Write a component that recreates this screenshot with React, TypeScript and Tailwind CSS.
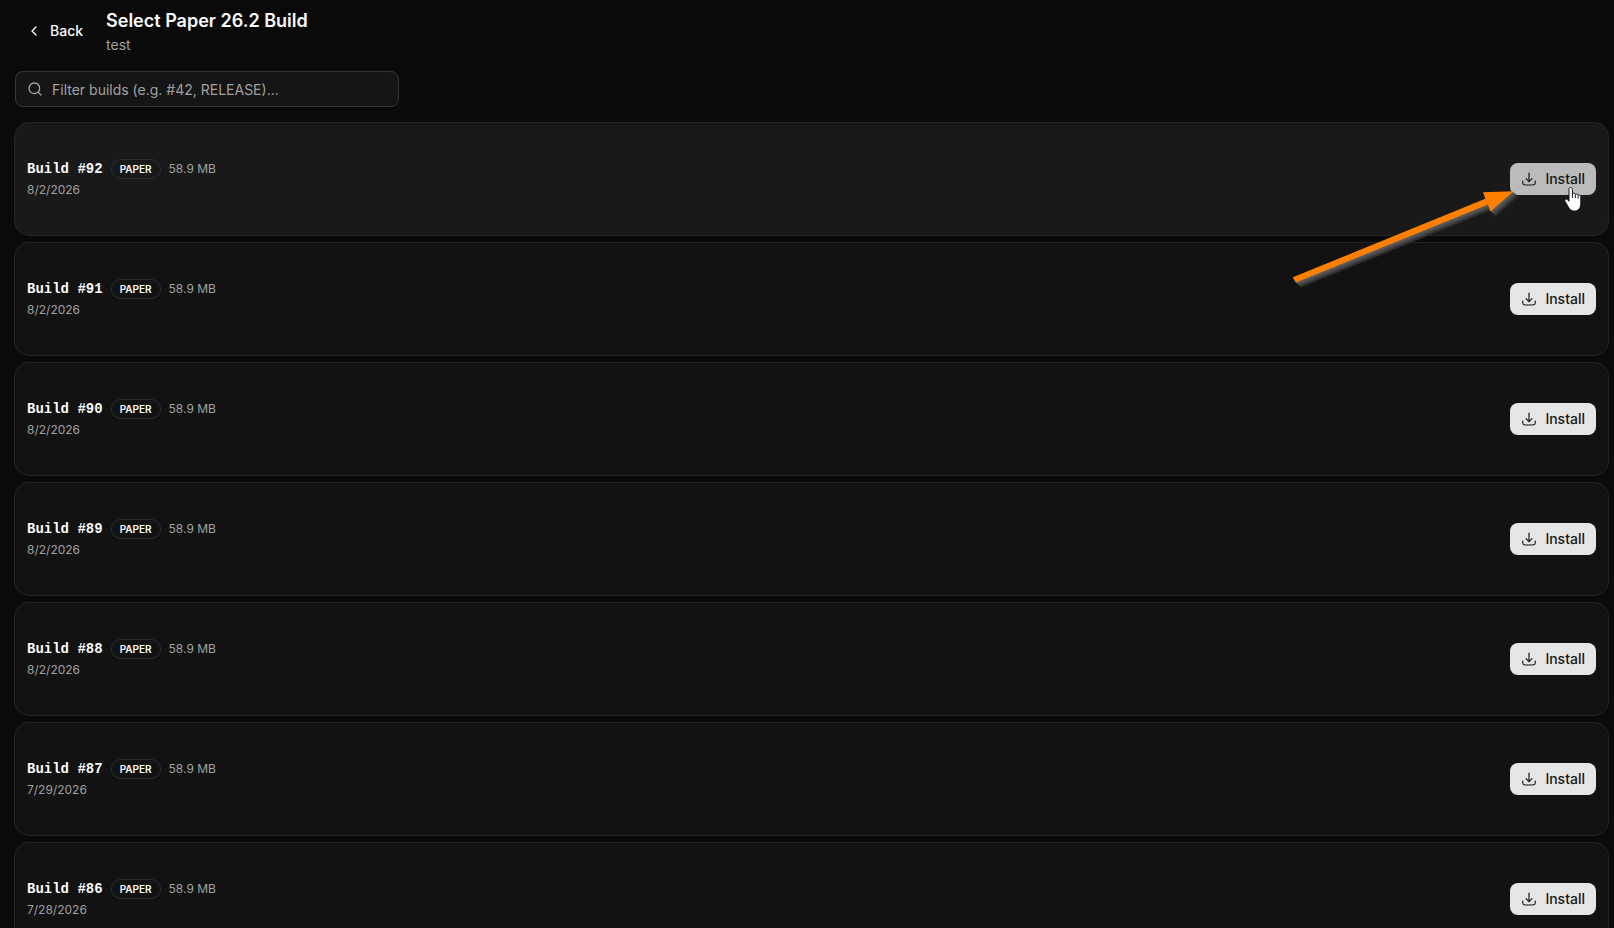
import { ChevronLeft, Search } from 'lucide-react';

type Build = { number: number; date: string; hovered?: boolean };

const builds: Build[] = [
  { number: 92, date: '8/2/2026', hovered: true },
  { number: 91, date: '8/2/2026' },
  { number: 90, date: '8/2/2026' },
  { number: 89, date: '8/2/2026' },
  { number: 88, date: '8/2/2026' },
  { number: 87, date: '7/29/2026' },
  { number: 86, date: '7/28/2026' },
];

function InstallIcon() {
  return (
    <svg viewBox="0 0 24 24" className="size-4" fill="none" stroke="currentColor" strokeWidth="1.8" strokeLinecap="round" strokeLinejoin="round" aria-hidden="true">
      <path d="M2.500 15c0 2.828 0 4.243.879 5.121C4.257 21 5.672 21 8.500 21h7c2.828 0 4.243 0 5.121-.879C21.500 19.243 21.500 17.828 21.500 15" />
      <path d="M12 3v13m0 0 4.500-4.500M12 16l-4.500-4.500" />
    </svg>
  );
}

function Pointer() {
  return (
    <svg viewBox="0 0 18 25" className="absolute left-[54px] top-6 z-20 h-[25px] w-[18px]" aria-hidden="true">
      <path
        d="M5 2.200c0-2.200 3.400-2.200 3.400 0v4.400c1-.8 2.500-.5 2.900.6 1-.6 2.400-.3 2.800.9 1.400-.5 2.700.2 2.700 1.600v6.500c0 4.600-2.300 7.900-6.300 7.900-3.200 0-4.900-1.600-6.300-4.300L.9 14.200c-.8-1.800 1.200-3 2.500-1.700L5 14.200z"
        fill="#fff"
        stroke="#10101c"
        strokeWidth="1"
        strokeLinejoin="round"
      />
      <path d="M8.400 6.500v4.500M11.300 7.500v3.700M14.100 8.500v3.200" stroke="#10101c" strokeWidth="1" fill="none" />
    </svg>
  );
}

const arrowPoints = '2.800,92.300 195.300,13.800 193,7.300 223.600,6.300 200.300,26.500 198,19.600 5.800,97.500';

const shadows = [
  { offset: 5, color: '#2b2b2b' },
  { offset: 4, color: '#383838' },
  { offset: 3, color: '#464646' },
  { offset: 2, color: '#525252' },
  { offset: 1, color: '#5c5c5c' },
];

function Arrow() {
  return (
    <svg viewBox="0 0 240 110" className="pointer-events-none absolute right-[78px] top-[62px] z-10 h-[110px] w-60" aria-hidden="true">
      {shadows.map((s) => (
        <polygon key={s.offset} points={arrowPoints} fill={s.color} transform={`translate(${s.offset} ${s.offset})`} />
      ))}
      <polygon points={arrowPoints} fill="#ff8000" />
    </svg>
  );
}

function BuildCard({ build }: { build: Build }) {
  return (
    <li className={`relative flex h-28 items-center justify-between rounded-[14px] px-3 ring-1 ring-[#242424] ${build.hovered ? 'bg-[#191919]' : 'bg-[#121212]'}`}>
      <div>
        <div className="flex items-center gap-2">
          <span className="font-['Liberation_Mono',monospace] text-sm font-bold text-neutral-50">Build #{build.number}</span>
          <span className="flex h-5 items-center rounded-full border border-[#2c2c2c] px-2 text-[10px] font-semibold text-neutral-50">PAPER</span>
          <span className="text-xs text-[#a1a1a1]">58.9 MB</span>
        </div>
        <p className="mt-0.5 text-xs/[18px] text-[#a1a1a1]">{build.date}</p>
      </div>
      <div className="relative">
        <button
          type="button"
          className={`flex h-8 items-center gap-2 rounded-lg border border-transparent px-2.5 text-sm font-medium text-[#171717] ${build.hovered ? 'bg-[#bbbbbb]' : 'bg-[#e5e5e5]'}`}
        >
          <InstallIcon />
          Install
        </button>
        {build.hovered && <Pointer />}
      </div>
      {build.hovered && <Arrow />}
    </li>
  );
}

export default function App() {
  return (
    <main className="h-screen overflow-hidden bg-[#0a0a0a] pl-[15px] pr-1.5 pt-[7px] font-['Inter',sans-serif] text-neutral-50">
      <header className="flex items-center gap-3">
        <button type="button" className="flex h-8 items-center gap-2 border border-transparent px-2.5 text-sm font-medium">
          <ChevronLeft className="size-4" />
          Back
        </button>
        <div>
          <h1 className="text-lg/7 font-semibold">Select Paper 26.2 Build</h1>
          <p className="text-sm text-[#a1a1a1]">test</p>
        </div>
      </header>
      <div className="relative mt-4 w-96">
        <Search className="absolute left-3 top-2.5 size-4 text-[#a1a1a1]" strokeWidth={2} />
        <input
          type="text"
          aria-label="Filter builds"
          placeholder="Filter builds (e.g. #42, RELEASE)..."
          className="h-9 w-full rounded-lg border border-[#363636] bg-[#151515] pl-9 pr-3 text-sm placeholder:text-[#a1a1a1]"
        />
      </div>
      <ul className="mt-4 flex flex-col gap-2">
        {builds.map((b) => (
          <BuildCard key={b.number} build={b} />
        ))}
      </ul>
    </main>
  );
}
